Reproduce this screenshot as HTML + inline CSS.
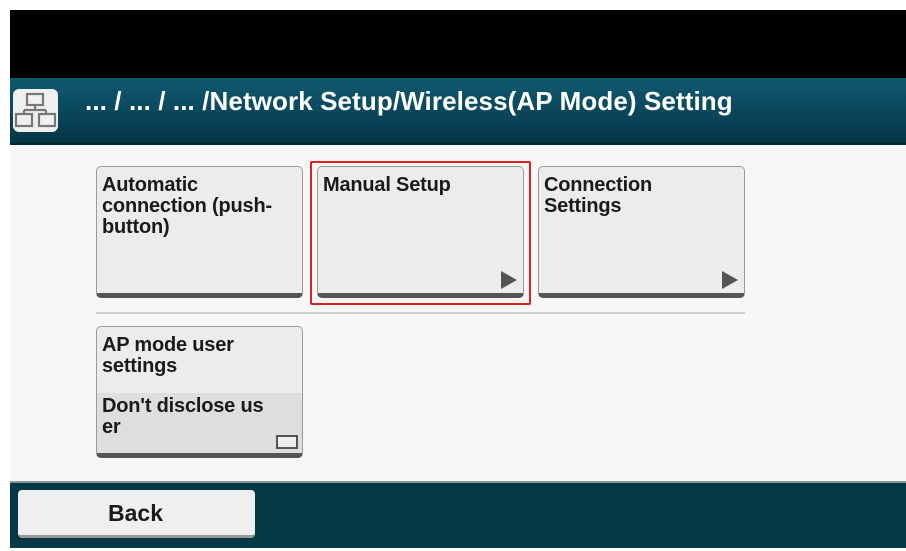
<!DOCTYPE html>
<html><head><style>
body{margin:0;width:906px;height:551px;background:#fff;position:relative;overflow:hidden;font-family:"Liberation Sans",sans-serif}
.abs{position:absolute}
.black{left:10px;top:10px;width:896px;height:68px;background:#000}
.hdr{left:10px;top:78px;width:896px;height:67px;background:linear-gradient(#0f5a70,#0a4458 60%,#063445);border-bottom:2px solid #0a2630;box-sizing:border-box}
.content{left:10px;top:145px;width:896px;height:336px;background:#f7f7f7}
.ftr{left:10px;top:481px;width:896px;height:67px;background:#033847;border-top:2px solid #8a9597;box-sizing:border-box}
.title{left:85px;top:86px;color:#fff;font-weight:bold;font-size:26px;letter-spacing:0.1px}
.btn{background:#ececec;border:1px solid #9a9a9a;border-bottom:5px solid #555;border-radius:5px;box-sizing:border-box;font-weight:bold;font-size:20px;letter-spacing:-0.2px;color:#1a1a1a;padding:8px 0 0 5px;line-height:21px}
.tri{position:absolute;right:6px;bottom:4px;width:0;height:0;border-left:16px solid #555;border-top:9px solid transparent;border-bottom:9px solid transparent}
</style></head><body>
<div class="abs black"></div>
<div class="abs hdr"></div>
<div class="abs" style="left:13px;top:89px;width:45px;height:43px;background:#f0f0f0;border-radius:6px">
<svg width="45" height="43" viewBox="0 0 45 43" fill="none" stroke="#777" stroke-width="2.2"><rect x="14" y="5" width="16" height="11"/><path d="M22 16v5M11 21h22M11 21v4M33 21v4"/><rect x="3" y="25" width="16" height="12"/><rect x="26" y="25" width="16" height="12"/></svg></div>
<div class="abs title">... / ... / ... /Network Setup/Wireless(AP Mode) Setting</div>
<div class="abs content"></div>
<div class="abs" style="left:310px;top:161px;width:221px;height:144px;border:2px solid #e02020;box-sizing:border-box;border-radius:2px"></div>
<div class="abs btn" style="left:96px;top:166px;width:207px;height:132px">Automatic<br>connection (push-<br>button)</div>
<div class="abs btn" style="left:317px;top:166px;width:207px;height:132px">Manual Setup<div class="tri"></div></div>
<div class="abs btn" style="left:538px;top:166px;width:207px;height:132px">Connection<br>Settings<div class="tri"></div></div>
<div class="abs" style="left:96px;top:312px;width:649px;height:2px;background:#d0d0d0"></div>
<div class="abs btn" style="left:96px;top:326px;width:207px;height:132px;padding:0;overflow:hidden">
<div style="padding:8px 0 0 5px;height:66px;box-sizing:border-box">AP mode user<br>settings</div>
<div style="background:#dedede;height:62px;padding:3px 0 0 5px;box-sizing:border-box;position:relative">Don't disclose us<br>er<div style="position:absolute;right:4px;bottom:6px;width:18px;height:10px;border:2px solid #555;background:#eee"></div></div></div>
<div class="abs ftr"></div>
<div class="abs" style="left:18px;top:490px;width:237px;height:48px;background:#efefef;border-radius:4px;border-bottom:3px solid #999;box-sizing:border-box;font-weight:bold;font-size:23px;color:#1a1a1a;padding:10px 0 0 90px">Back</div>
</body></html>
